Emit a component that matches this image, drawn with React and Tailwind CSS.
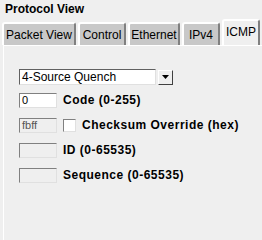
import React from "react";

const tabs = [
    { label: "Packet View", w: "w-[74px]" },
    { label: "Control", w: "w-[48px]" },
    { label: "Ethernet", w: "w-[52px]" },
    { label: "IPv4", w: "w-[38px]" },
];

const Field = ({ value, grey }) => (
    <div className={`h-[15px] w-[38px] shrink-0 border border-t-[#808080] border-l-[#808080] border-b-[#e0e0e0] border-r-[#e0e0e0] px-[2px] text-[11px] font-normal tracking-normal leading-[13px] ${grey ? "bg-[#efefef] text-[#555]" : "bg-white text-black"}`}>
        {value}
    </div>
);

export default function App() {
    return (
        <div className="w-[262px] h-[240px] bg-[#efefef] overflow-hidden font-['Liberation_Sans',Arial,sans-serif] text-black">
            <div className="px-[5px] pt-[2px] h-[19px] text-[12px] font-bold leading-[14px]">Protocol View</div>
            <div className="flex items-end h-[26px] pl-[2px] gap-[2px]">
                {tabs.map((t) => (
                    <div key={t.label} className={`${t.w} h-[23px] bg-[#c8c8c8] border-t-2 border-l-2 border-r-2 border-t-white border-l-white border-r-[#808080] rounded-t-[3px] flex items-center justify-center text-[12px]`}>
                        {t.label}
                    </div>
                ))}
                <div className="w-[38px] h-[26px] bg-[#efefef] border-t-2 border-l-2 border-r-2 border-t-white border-l-white border-r-[#808080] rounded-t-[3px] flex items-center justify-center text-[12px] pb-[2px]">
                    ICMP
                </div>
            </div>
            <div className="h-[200px] ml-[3px] border-l border-t border-white pt-[23px] pl-[15px]">
                <div className="flex items-center h-[16px]">
                    <div className="w-[137px] h-[16px] bg-white border border-t-[#606060] border-l-[#606060] border-b-[#e0e0e0] border-r-[#e0e0e0] px-[2px] text-[12px] leading-[14px]">
                        4-Source Quench
                    </div>
                    <div className="ml-[2px] w-[15px] h-[15px] bg-[#efefef] border border-t-white border-l-white border-b-[#404040] border-r-[#404040] flex items-center justify-center">
                        <svg width="7" height="4" viewBox="0 0 7 4"><path d="M0 0h7L3.5 4z" fill="#000" /></svg>
                    </div>
                </div>
                <div className="flex flex-col gap-[10px] mt-[8px] text-[12px] font-bold tracking-[0.5px] leading-[15px]">
                    <div className="flex items-center h-[15px] gap-[6px]">
                        <Field value="0" />
                        <span>Code (0-255)</span>
                    </div>
                    <div className="flex items-center h-[15px]">
                        <Field value="fbff" grey />
                        <div className="ml-[6px] w-[13px] h-[13px] bg-white border border-t-[#808080] border-l-[#808080] border-b-[#e0e0e0] border-r-[#e0e0e0]" />
                        <span className="ml-[6px]">Checksum Override (hex)</span>
                    </div>
                    <div className="flex items-center h-[15px] gap-[6px]">
                        <Field value="" grey />
                        <span>ID (0-65535)</span>
                    </div>
                    <div className="flex items-center h-[15px] gap-[6px]">
                        <Field value="" grey />
                        <span>Sequence (0-65535)</span>
                    </div>
                </div>
            </div>
        </div>
    );
}
